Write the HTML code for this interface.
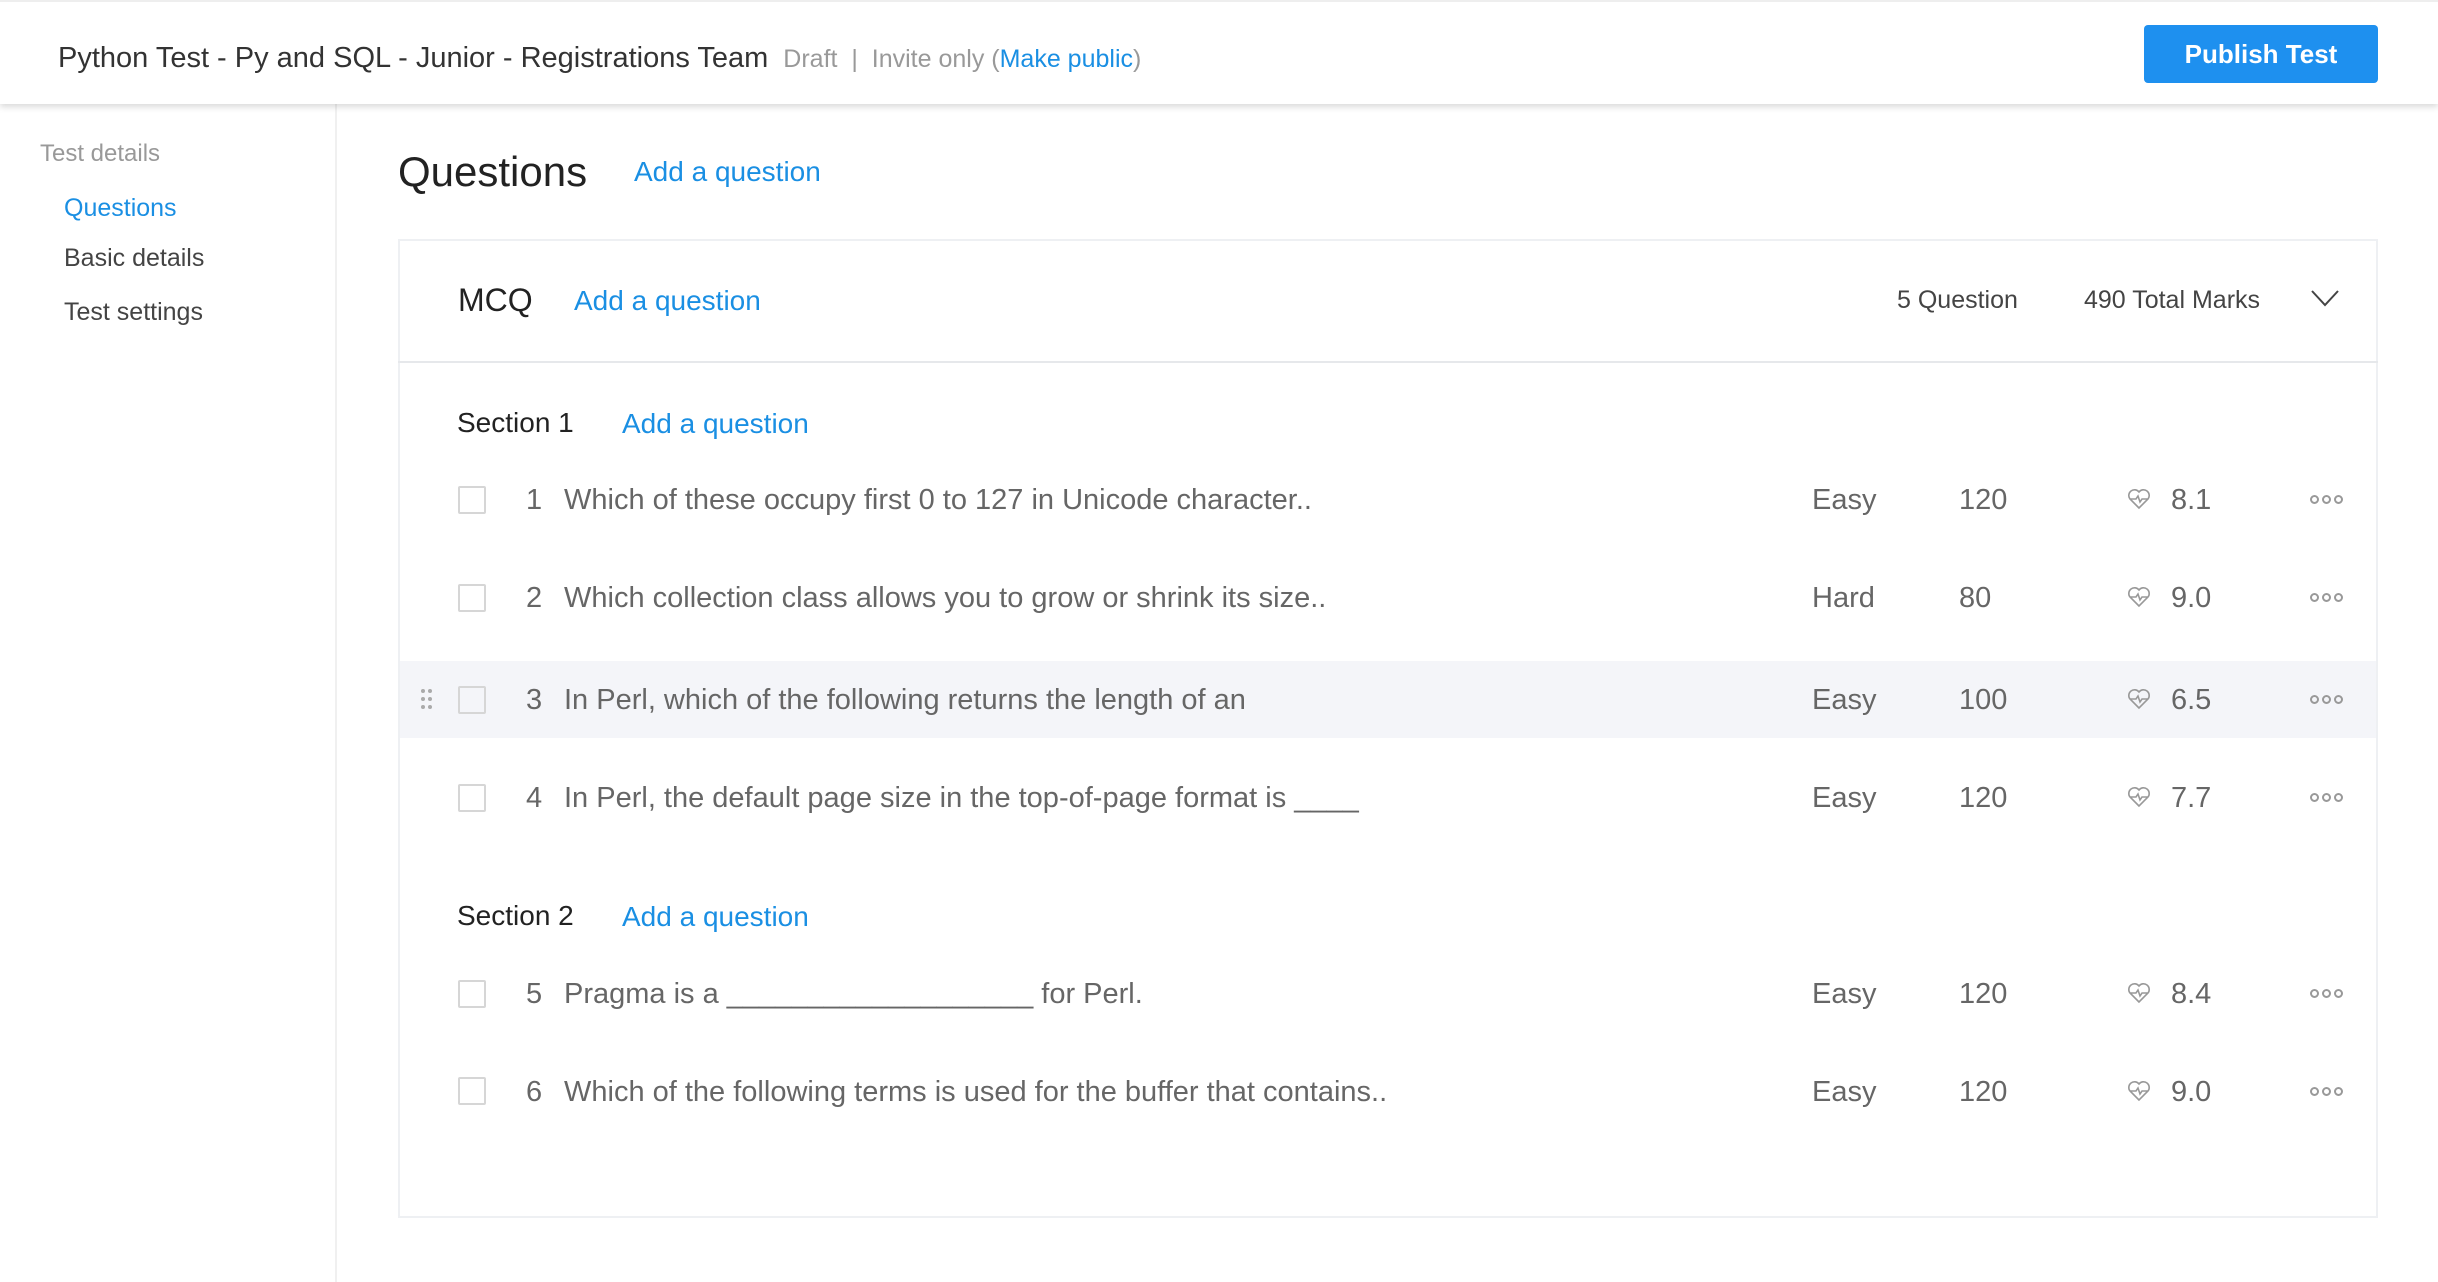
<!DOCTYPE html>
<html><head><meta charset="utf-8"><style>
*{box-sizing:border-box;margin:0;padding:0}
body{width:2438px;height:1282px;background:#fff;font-family:"Liberation Sans",sans-serif;position:relative;overflow:hidden;color:#333}
.a{position:absolute;white-space:nowrap;line-height:1}
.hdr{position:absolute;left:0;top:0;width:2438px;height:104px;background:#fff;box-shadow:0 3px 6px rgba(0,0,0,.15);z-index:2;border-top:2px solid #eee}
.blue{color:#1a8fe3}
.side{position:absolute;left:0;top:104px;width:337px;height:1178px;border-right:2px solid #f0f0f0}
.card{position:absolute;left:398px;top:239px;width:1980px;height:979px;border:2px solid #eef0f3}
.cb{position:absolute;left:458px;width:28px;height:28px;border:2px solid #d6d6d6;border-radius:2px}
.row{color:#666;font-size:29px}
.dots{position:absolute;left:2310px;width:50px;height:10px;white-space:nowrap;line-height:0}
.dots i{display:inline-block;width:9px;height:9px;border:2px solid #999;border-radius:50%;margin-right:3px}
</style></head><body>
<div class="hdr">
<div class="a" style="left:58px;top:42px;font-size:29px;color:#333">Python Test - Py and SQL - Junior - Registrations Team <span style="font-size:25px;color:#999">&nbsp;Draft &nbsp;| &nbsp;Invite only (<span class="blue">Make public</span>)</span></div>
<div class="a" style="left:2144px;top:23px;width:234px;height:58px;background:#1e90ef;border-radius:4px;color:#fff;font-size:26px;font-weight:bold;text-align:center;line-height:58px">Publish Test</div>
</div>
<div class="side"></div>
<div class="a" style="left:40px;top:142px;font-size:24px;color:#999">Test details</div>
<div class="a blue" style="left:64px;top:196px;font-size:25px">Questions</div>
<div class="a" style="left:64px;top:246px;font-size:25px;color:#444">Basic details</div>
<div class="a" style="left:64px;top:300px;font-size:25px;color:#444">Test settings</div>

<div class="a" style="left:398px;top:151px;font-size:42px;color:#222">Questions</div>
<div class="a blue" style="left:634px;top:158px;font-size:28px">Add a question</div>

<div class="card"></div>
<div class="a" style="left:398px;top:361px;width:1980px;height:2px;background:#e6e8eb"></div>
<div class="a" style="left:458px;top:284px;font-size:32px;color:#222">MCQ</div>
<div class="a blue" style="left:574px;top:287px;font-size:28px">Add a question</div>
<div class="a" style="left:1897px;top:288px;font-size:25px;color:#444">5 Question</div>
<div class="a" style="left:2084px;top:288px;font-size:25px;color:#444">490 Total Marks</div>
<svg class="a" style="left:2310px;top:288px" width="30" height="20" viewBox="0 0 30 20"><path d="M2 3 L15 17 L28 3" fill="none" stroke="#444" stroke-width="2"/></svg>

<div class="a" style="left:457px;top:409px;font-size:28px;color:#222">Section 1</div>
<div class="a blue" style="left:622px;top:410px;font-size:28px">Add a question</div>
<div class="a" style="left:457px;top:902px;font-size:28px;color:#222">Section 2</div>
<div class="a blue" style="left:622px;top:903px;font-size:28px">Add a question</div>

<div class="a" style="left:400px;top:661px;width:1976px;height:77px;background:#f4f5f9"></div>
<svg class="a" style="left:420px;top:688px" width="14" height="22"><g fill="#aaa"><circle cx="3" cy="3" r="2"/><circle cx="10" cy="3" r="2"/><circle cx="3" cy="11" r="2"/><circle cx="10" cy="11" r="2"/><circle cx="3" cy="19" r="2"/><circle cx="10" cy="19" r="2"/></g></svg>

<div class="cb" style="top:486px"></div><div class="a row" style="left:526px;top:486px">1</div><div class="a row" style="left:564px;top:486px">Which of these occupy first 0 to 127 in Unicode character..</div><div class="a row" style="left:1812px;top:486px">Easy</div><div class="a row" style="left:1959px;top:486px">120</div><div class="a row" style="left:2171px;top:486px">8.1</div>
<div class="cb" style="top:584px"></div><div class="a row" style="left:526px;top:584px">2</div><div class="a row" style="left:564px;top:584px">Which collection class allows you to grow or shrink its size..</div><div class="a row" style="left:1812px;top:584px">Hard</div><div class="a row" style="left:1959px;top:584px">80</div><div class="a row" style="left:2171px;top:584px">9.0</div>
<div class="cb" style="top:686px"></div><div class="a row" style="left:526px;top:686px">3</div><div class="a row" style="left:564px;top:686px">In Perl, which of the following returns the length of an</div><div class="a row" style="left:1812px;top:686px">Easy</div><div class="a row" style="left:1959px;top:686px">100</div><div class="a row" style="left:2171px;top:686px">6.5</div>
<div class="cb" style="top:784px"></div><div class="a row" style="left:526px;top:784px">4</div><div class="a row" style="left:564px;top:784px">In Perl, the default page size in the top-of-page format is ____</div><div class="a row" style="left:1812px;top:784px">Easy</div><div class="a row" style="left:1959px;top:784px">120</div><div class="a row" style="left:2171px;top:784px">7.7</div>
<div class="cb" style="top:980px"></div><div class="a row" style="left:526px;top:980px">5</div><div class="a row" style="left:564px;top:980px">Pragma is a ___________________ for Perl.</div><div class="a row" style="left:1812px;top:980px">Easy</div><div class="a row" style="left:1959px;top:980px">120</div><div class="a row" style="left:2171px;top:980px">8.4</div>
<div class="cb" style="top:1077px"></div><div class="a row" style="left:526px;top:1078px">6</div><div class="a row" style="left:564px;top:1078px">Which of the following terms is used for the buffer that contains..</div><div class="a row" style="left:1812px;top:1078px">Easy</div><div class="a row" style="left:1959px;top:1078px">120</div><div class="a row" style="left:2171px;top:1078px">9.0</div>

<svg class="a" style="left:2127px;top:488px" width="24" height="22" viewBox="0 0 24 22"><path d="M12 20 L3 11 A5 5 0 0 1 12 4 A5 5 0 0 1 21 11 Z M3 11 H9 L11 8 L13 14 L15 11 H21" fill="none" stroke="#999" stroke-width="1.6"/></svg>
<svg class="a" style="left:2127px;top:586px" width="24" height="22" viewBox="0 0 24 22"><path d="M12 20 L3 11 A5 5 0 0 1 12 4 A5 5 0 0 1 21 11 Z M3 11 H9 L11 8 L13 14 L15 11 H21" fill="none" stroke="#999" stroke-width="1.6"/></svg>
<svg class="a" style="left:2127px;top:688px" width="24" height="22" viewBox="0 0 24 22"><path d="M12 20 L3 11 A5 5 0 0 1 12 4 A5 5 0 0 1 21 11 Z M3 11 H9 L11 8 L13 14 L15 11 H21" fill="none" stroke="#999" stroke-width="1.6"/></svg>
<svg class="a" style="left:2127px;top:786px" width="24" height="22" viewBox="0 0 24 22"><path d="M12 20 L3 11 A5 5 0 0 1 12 4 A5 5 0 0 1 21 11 Z M3 11 H9 L11 8 L13 14 L15 11 H21" fill="none" stroke="#999" stroke-width="1.6"/></svg>
<svg class="a" style="left:2127px;top:982px" width="24" height="22" viewBox="0 0 24 22"><path d="M12 20 L3 11 A5 5 0 0 1 12 4 A5 5 0 0 1 21 11 Z M3 11 H9 L11 8 L13 14 L15 11 H21" fill="none" stroke="#999" stroke-width="1.6"/></svg>
<svg class="a" style="left:2127px;top:1080px" width="24" height="22" viewBox="0 0 24 22"><path d="M12 20 L3 11 A5 5 0 0 1 12 4 A5 5 0 0 1 21 11 Z M3 11 H9 L11 8 L13 14 L15 11 H21" fill="none" stroke="#999" stroke-width="1.6"/></svg>

<div class="dots" style="top:495px"><i></i><i></i><i></i></div>
<div class="dots" style="top:593px"><i></i><i></i><i></i></div>
<div class="dots" style="top:695px"><i></i><i></i><i></i></div>
<div class="dots" style="top:793px"><i></i><i></i><i></i></div>
<div class="dots" style="top:989px"><i></i><i></i><i></i></div>
<div class="dots" style="top:1087px"><i></i><i></i><i></i></div>
</body></html>
